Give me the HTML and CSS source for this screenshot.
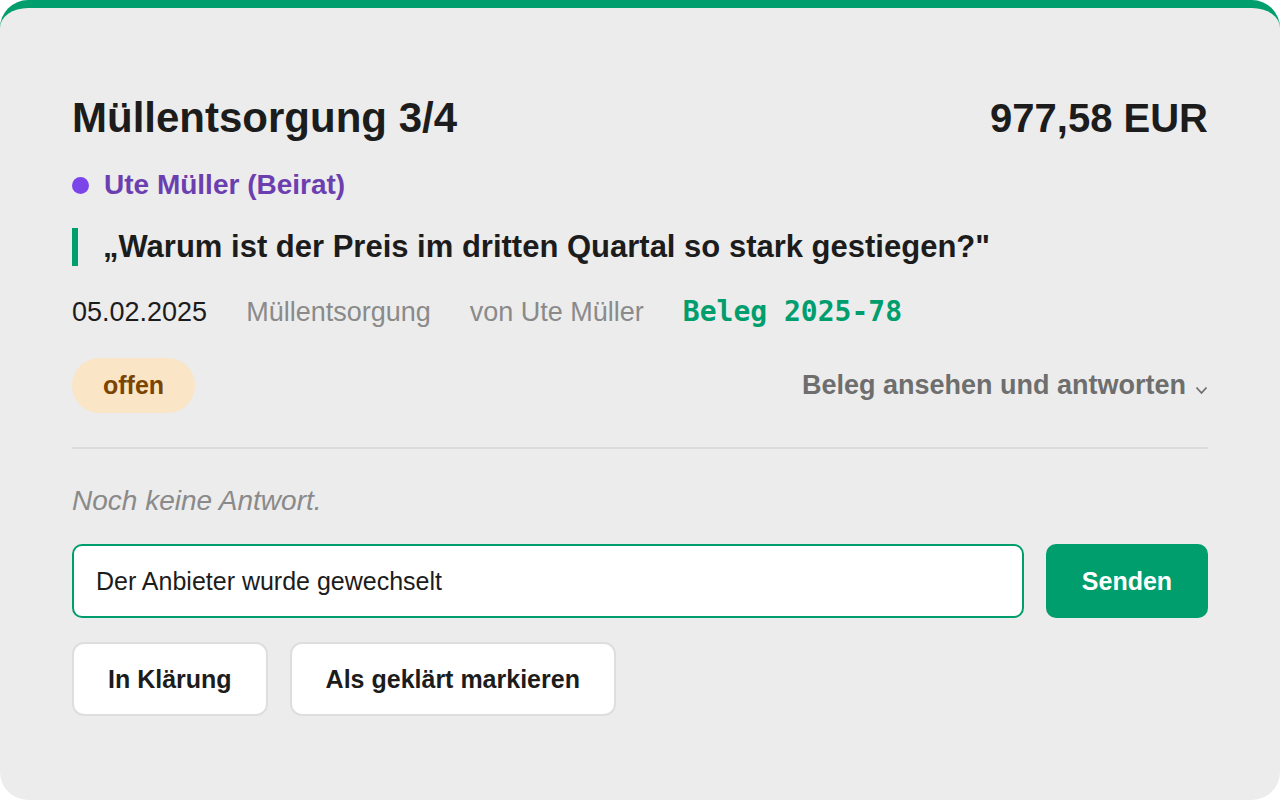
FILE: index.html
```html
<!DOCTYPE html>
<html lang="de">
<head>
  <meta charset="UTF-8" />
  <meta name="viewport" content="width=device-width, initial-scale=1.0" />
  <title>Rückfrage</title>
  <link rel="stylesheet" href="styles.css">
</head>
<body>
  <div class="card">
    <div class="head">
      <h1>Müllentsorgung 3/4</h1>
      <div class="amount">977,58 EUR</div>
    </div>
    <div class="author"><span class="dot"></span>Ute Müller (Beirat)</div>
    <blockquote>„Warum ist der Preis im dritten Quartal so stark gestiegen?"</blockquote>
    <div class="meta">
      <span class="date">05.02.2025</span>
      <span class="muted">Müllentsorgung</span>
      <span class="muted">von Ute Müller</span>
      <span class="ref">Beleg 2025-78</span>
    </div>
    <div class="status-row">
      <span class="pill">offen</span>
      <a class="toggle">Beleg ansehen und antworten
        <svg class="chev" width="13" height="9" viewBox="0 0 13 9"><polyline points="1.5,1.5 6.5,7 11.5,1.5" fill="none" stroke="#6e6e6e" stroke-width="1.8"/></svg>
      </a>
    </div>
    <hr />
    <p class="empty">Noch keine Antwort.</p>
    <div class="reply">
      <input id="answer" value="Der Anbieter wurde gewechselt" />
      <button class="send">Senden</button>
    </div>
    <div class="actions">
      <button class="ghost">In Klärung</button>
      <button class="ghost">Als geklärt markieren</button>
    </div>
  </div>
</body>
</html>
```

FILE: styles.css
```css
:root {
  --bg: #ececec;
  --fg: #1c1c1c;
  --green: #009e6d;
  --muted: #8a8a8a;
  --purple: #6c3fb0;
}
* {
  box-sizing: border-box;
}
body {
  margin: 0;
  background: #fff;
  font-family: 'Liberation Sans', Arial, sans-serif;
  color: var(--fg);
}
.card {
  height: 800px;
  background: var(--bg);
  border-top: 8px solid var(--green);
  border-radius: 28px;
  padding: 84px 72px 0;
}
.head {
  display: flex;
  justify-content: space-between;
  align-items: center;
}
h1, .amount {
  margin: 0;
  font-size: 40px;
  font-weight: bold;
  line-height: 52px;
}
h1 {
  font-size: 42px;
}
.author {
  display: flex;
  align-items: center;
  gap: 15px;
  margin-top: 24px;
  color: var(--purple);
  font-size: 28px;
  font-weight: bold;
  line-height: 34px;
}
.dot {
  width: 17px;
  height: 17px;
  border-radius: 50%;
  background: #7c45ea;
}
blockquote {
  margin: 26px 0 0;
  border-left: 6px solid var(--green);
  padding-left: 25px;
  font-size: 31px;
  font-weight: bold;
  line-height: 38px;
}
.meta {
  display: flex;
  align-items: baseline;
  gap: 39px;
  margin-top: 28px;
  font-size: 27px;
  line-height: 36px;
}
.muted {
  color: var(--muted);
}
.ref {
  font-family: 'DejaVu Sans Mono', 'Liberation Mono', monospace;
  font-weight: bold;
  color: var(--green);
  font-size: 28px;
}
.status-row {
  display: flex;
  justify-content: space-between;
  align-items: center;
  margin-top: 28px;
}
.pill {
  background: #fae5c6;
  color: #7a4500;
  font-weight: bold;
  font-size: 25px;
  padding: 0 31px;
  line-height: 55px;
  border-radius: 28px;
}
.toggle {
  display: flex;
  align-items: center;
  gap: 9px;
  color: #6e6e6e;
  font-weight: bold;
  font-size: 27px;
}
.chev {
  margin-top: 10px;
}
hr {
  border: 0;
  border-top: 2px solid #dcdcdc;
  margin: 34px 0 0;
}
.empty {
  margin: 35px 0 0;
  color: var(--muted);
  font-style: italic;
  font-size: 28px;
  line-height: 34px;
}
.reply {
  display: flex;
  gap: 22px;
  margin-top: 26px;
}
input, button {
  font-family: inherit;
  height: 74px;
  border-radius: 10px;
}
input {
  flex: 1;
  border: 2px solid var(--green);
  background: #fff;
  padding: 0 22px;
  font-size: 25px;
  color: var(--fg);
  outline: none;
}
button {
  cursor: pointer;
  font-size: 25px;
  font-weight: bold;
}
.send {
  width: 162px;
  border: 0;
  background: var(--green);
  color: #fff;
}
.actions {
  display: flex;
  gap: 22px;
  margin-top: 24px;
}
.ghost {
  background: #fff;
  border: 2px solid #dedede;
  border-radius: 12px;
  color: var(--fg);
  padding: 0 34px;
}
```
